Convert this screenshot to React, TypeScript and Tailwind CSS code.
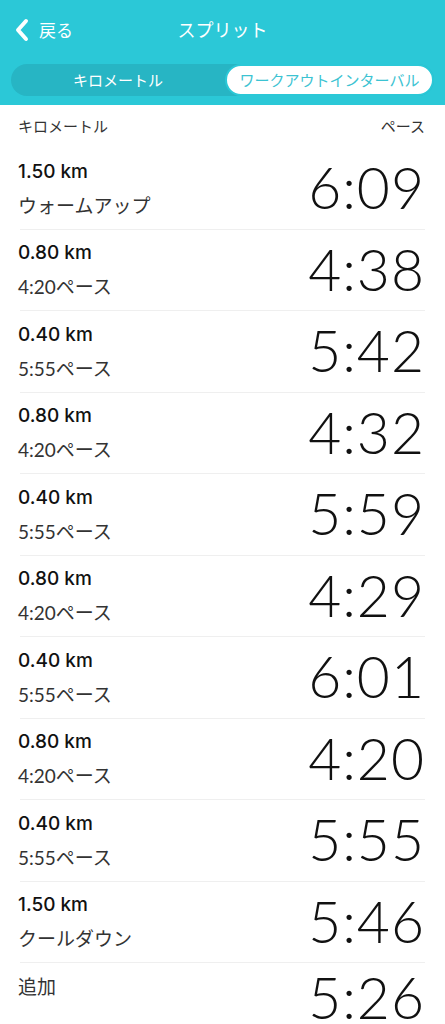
const ROWS = [
  { dist: '1.50 km', label: 'ウォームアップ', pace: '6:09' },
  { dist: '0.80 km', label: '4:20ペース', pace: '4:38' },
  { dist: '0.40 km', label: '5:55ペース', pace: '5:42' },
  { dist: '0.80 km', label: '4:20ペース', pace: '4:32' },
  { dist: '0.40 km', label: '5:55ペース', pace: '5:59' },
  { dist: '0.80 km', label: '4:20ペース', pace: '4:29' },
  { dist: '0.40 km', label: '5:55ペース', pace: '6:01' },
  { dist: '0.80 km', label: '4:20ペース', pace: '4:20' },
  { dist: '0.40 km', label: '5:55ペース', pace: '5:55' },
  { dist: '1.50 km', label: 'クールダウン', pace: '5:46' },
]

const JP = "font-['Lato','Noto_Sans_CJK_JP',sans-serif]"

export default function App() {
  return (
    <div className={`w-[445px] h-[1024px] overflow-hidden bg-white ${JP}`}>
      {/* Header */}
      <header className="bg-[#2bc8d7] h-[105px] flex flex-col">
        <div className="relative h-[60px] flex items-center justify-center">
          <div className="absolute left-[13px] top-[18px] flex items-center gap-[8px] text-white">
            <svg width="18" height="24" viewBox="0 0 18 24" fill="none">
              <path d="M13 3 L5 12 L13 21" stroke="white" strokeWidth="4" strokeLinecap="round" strokeLinejoin="round" />
            </svg>
            <span className="text-[17px] leading-none">戻る</span>
          </div>
          <span className="text-white text-[18px] leading-none">スプリット</span>
        </div>
        <div className="mx-[11px] mt-[4px] h-[32px] rounded-full bg-[#27b5c4] flex">
          <div className="flex-1 flex items-center justify-center text-white text-[15px]">キロメートル</div>
          <div className="w-[209px] rounded-full bg-white border-2 border-[#2bc8d7] flex items-center justify-center text-[#3cc3d2] text-[15px]">
            ワークアウトインターバル
          </div>
        </div>
      </header>

      {/* Column labels */}
      <div className="h-[43px] flex items-center justify-between px-[18px] pr-[20px] text-[15px] text-[#333]">
        <span>キロメートル</span>
        <span>ペース</span>
      </div>

      {/* Splits */}
      {ROWS.map((r, i) => (
        <div key={i} className="h-[81.5px] pl-[18px] pr-[20px] flex items-center justify-between relative">
          <div className="flex flex-col">
            <span className="font-['Inter','Noto_Sans_CJK_JP',sans-serif] text-[19px] font-medium text-[#111] leading-[24px]">{r.dist}</span>
            <span className="text-[19px] text-[#333] leading-[24px] mt-[10px]">{r.label}</span>
          </div>
          <span className="text-[57px] font-light text-[#111] leading-none tracking-[1px] -mt-[2px]">{r.pace}</span>
          <div className="absolute left-[20px] right-[20px] bottom-0 h-px bg-[#efefef]" />
        </div>
      ))}

      <div className="h-[61px] pl-[18px] pr-[20px] flex justify-between">
        <span className="text-[19px] text-[#333] mt-[10px]">追加</span>
        <span className="text-[57px] font-light text-[#111] leading-none tracking-[1px] mt-[6px]">5:26</span>
      </div>
    </div>
  )
}
